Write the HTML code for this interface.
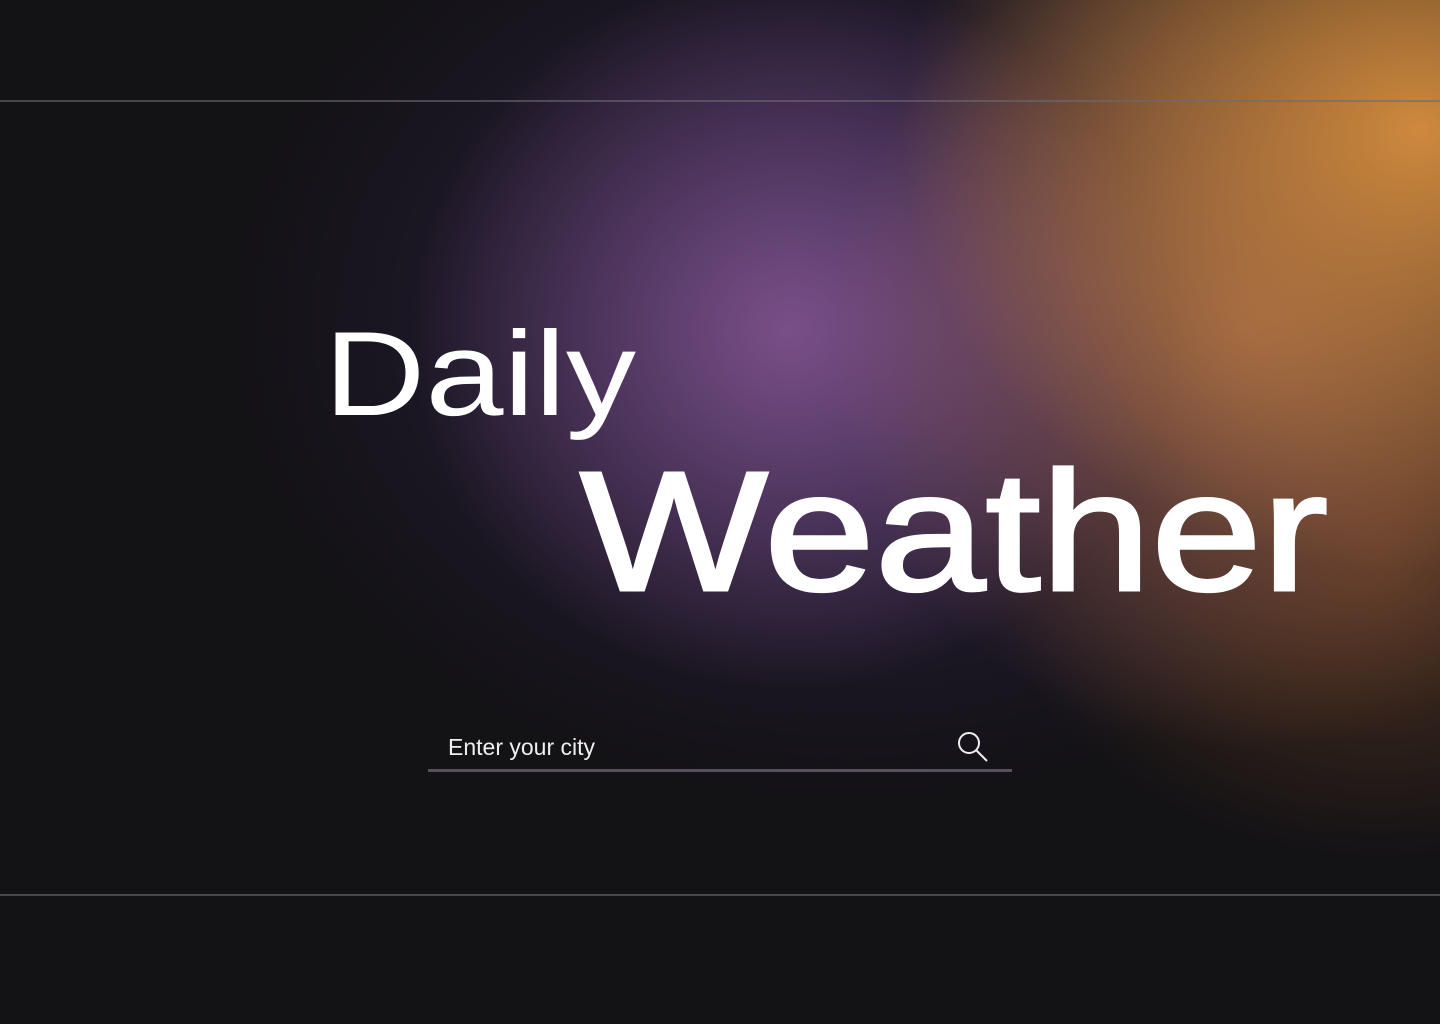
<!DOCTYPE html>
<html><head><meta charset="utf-8"><style>
html,body{margin:0;padding:0}
body{width:1440px;height:1024px;overflow:hidden;position:relative;background:#131215;font-family:"Liberation Sans",sans-serif;}
.bg{position:absolute;inset:0;
background:
radial-gradient(ellipse 520px 440px at 1420px 130px, rgba(214,142,62,0.95), rgba(214,142,62,0) 100%),
radial-gradient(ellipse 420px 420px at 1250px 330px, rgba(175,110,80,0.7), rgba(175,110,80,0) 100%),
radial-gradient(ellipse 380px 360px at 790px 330px, rgba(125,82,140,0.95), rgba(90,60,120,0) 100%),
radial-gradient(ellipse 620px 480px at 850px 320px, rgba(55,38,85,0.75), rgba(55,38,85,0) 100%),
radial-gradient(ellipse 380px 300px at 1380px 560px, rgba(130,75,40,0.55), rgba(130,75,40,0) 100%),
#131215;}
.line{position:absolute;left:0;width:1440px;height:2px;background:rgba(110,105,115,0.6)}
.t{position:absolute;color:#fff;white-space:nowrap;line-height:1;transform-origin:0 0}
</style></head><body>
<div class="bg"></div>
<div class="line" style="top:100px"></div>
<div class="line" style="top:894px"></div>
<div class="t" style="left:324px;top:314px;font-size:120px;transform:scaleX(1.17)">Daily</div>
<div class="t" style="left:580px;top:447px;font-size:170px;-webkit-text-stroke:3px #fff;transform:scaleX(1.17)">Weather</div>
<div class="t" style="left:448px;top:736px;font-size:23px;color:#eee">Enter your city</div>
<div style="position:absolute;left:428px;top:769px;width:584px;height:3px;background:#55505c"></div>
<svg style="position:absolute;left:950px;top:725px" width="44" height="44" viewBox="0 0 44 44" fill="none" stroke="#eee" stroke-width="2">
<circle cx="19" cy="18" r="10"/><path d="M26 25L37 36"/></svg>
</body></html>
